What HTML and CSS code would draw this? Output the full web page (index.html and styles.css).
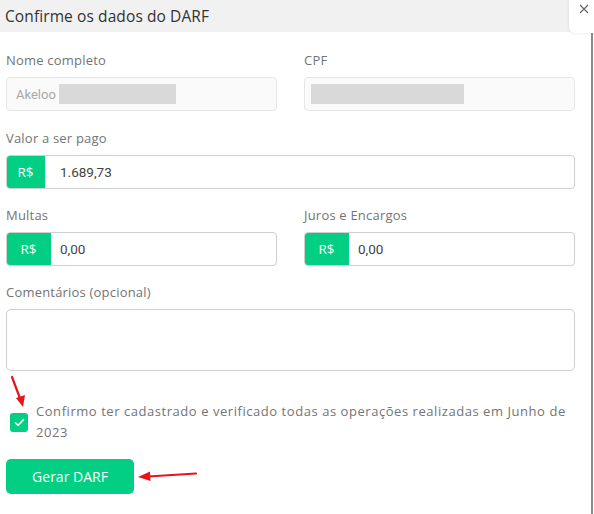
FILE: index.html
```html
<!DOCTYPE html>
<html lang="pt-BR">
<head>
    <meta charset="UTF-8">
    <title>Confirme os dados do DARF</title>
    <link rel="stylesheet" href="styles.css">
</head>
<body>
    <div class="modal">
        <div class="modal-header">
            <h2>Confirme os dados do DARF</h2>
        </div>
        <button class="close-btn" aria-label="Fechar">
            <svg width="10" height="10" viewBox="0 0 10 10"><path d="M1 1 L9 9 M9 1 L1 9" stroke="#666" stroke-width="1.2" fill="none"/></svg>
        </button>

        <div class="modal-body">
            <div class="row first-row">
                <div class="field">
                    <label>Nome completo</label>
                    <div class="input readonly">
                        <span class="value muted">Akeloo</span>
                        <span class="redacted name-redacted"></span>
                    </div>
                </div>
                <div class="field">
                    <label>CPF</label>
                    <div class="input readonly">
                        <span class="redacted cpf-redacted"></span>
                    </div>
                </div>
            </div>

            <div class="field">
                <label>Valor a ser pago</label>
                <div class="input money">
                    <span class="addon addon-wide">R$</span>
                    <span class="value value-wide">1.689,73</span>
                </div>
            </div>

            <div class="row">
                <div class="field">
                    <label>Multas</label>
                    <div class="input money">
                        <span class="addon">R$</span>
                        <span class="value">0,00</span>
                    </div>
                </div>
                <div class="field">
                    <label>Juros e Encargos</label>
                    <div class="input money">
                        <span class="addon">R$</span>
                        <span class="value">0,00</span>
                    </div>
                </div>
            </div>

            <div class="field">
                <label>Comentários (opcional)</label>
                <div class="textarea"></div>
            </div>

            <div class="confirm">
                <span class="checkbox">
                    <svg width="11" height="9" viewBox="0 0 11 9"><path d="M1.5 4.8 L4.2 7.3 L9.5 1.6" fill="none" stroke="#fff" stroke-width="1.6" stroke-linecap="round" stroke-linejoin="round"/></svg>
                </span>
                <p>Confirmo ter cadastrado e verificado todas as operações realizadas em Junho de 2023</p>
                <svg class="arrow arrow-down" width="20" height="34" viewBox="0 0 20 34"><path d="M3 2 L12 26" stroke="#e8141b" stroke-width="2.2" fill="none" stroke-linecap="round"/><path d="M7 23 L14 32 L16 20 Z" fill="#e8141b"/></svg>
            </div>

            <div class="actions">
                <button class="primary">Gerar DARF</button>
                <svg class="arrow arrow-left" width="62" height="12" viewBox="0 0 62 12"><path d="M60 3.5 L12 6.5" stroke="#e8141b" stroke-width="2.2" fill="none" stroke-linecap="round"/><path d="M2 7 L14 1.5 L14.5 11 Z" fill="#e8141b"/></svg>
            </div>
        </div>
    </div>
</body>
</html>
```

FILE: styles.css
```css
body {
    margin: 0;
    background: #fff;
    font-family: 'Open Sans', 'Noto Sans', Arial, sans-serif;
}

.modal {
    position: relative;
    width: 594px;
    height: 514px;
    overflow: hidden;
}

.modal::after {
    content: '';
    position: absolute;
    left: 591px;
    top: 23px;
    bottom: 0;
    width: 2px;
    background: #8a8a8a;
}

.modal-header {
    background: #f1f1f1;
    height: 32px;
    display: flex;
    align-items: center;
    padding-left: 5px;
}

h2 {
    margin: 0;
    font-size: 15.5px;
    font-weight: 400;
    color: #333;
    letter-spacing: 0.1px;
}

.close-btn {
    position: absolute;
    top: 0;
    right: 0;
    width: 25px;
    height: 33px;
    padding: 4px 0 0 4px;
    display: flex;
    justify-content: center;
    align-items: flex-start;
    border: none;
    background: #fff;
    border-bottom-left-radius: 6px;
    box-shadow: -1px 1px 3px rgba(0,0,0,0.06);
    z-index: 2;
}

.modal-body {
    padding: 20px 19px 0 6px;
    display: flex;
    flex-direction: column;
    gap: 18px;
}

.row {
    display: flex;
    gap: 27px;
}

.first-row {
    margin-bottom: 1px;
}

.row .field {
    flex: 1;
}

.field label {
    display: block;
    font-size: 13px;
    color: #747474;
    line-height: 16px;
    margin-bottom: 9px;
    letter-spacing: 0.2px;
}

.input {
    height: 34px;
    box-sizing: border-box;
    border: 1px solid #cfcfcf;
    border-radius: 4px;
    display: flex;
    align-items: center;
    background: #fff;
    font-family: Roboto, Arial, sans-serif;
    font-size: 13.5px;
    color: #444;
}

.input.readonly {
    background: #fafafa;
    border-color: #e6e6e6;
    padding-left: 9px;
}

.value.muted {
    color: #a8a8a8;
    font-size: 13px;
}

.redacted {
    display: block;
    height: 20px;
    background: #d9d9d9;
}

.name-redacted {
    width: 117px;
    margin-left: 3px;
}

.cpf-redacted {
    width: 153px;
    margin-left: -3px;
}

.money {
    overflow: hidden;
}

.addon {
    align-self: stretch;
    margin: -1px 0 -1px -1px;
    width: 45px;
    display: flex;
    align-items: center;
    justify-content: center;
    background: #02cf83;
    color: #fff;
    font-family: 'Open Sans', sans-serif;
    font-size: 13.5px;
    border-radius: 4px 0 0 4px;
}

.addon-wide {
    width: 39px;
}

.money .value {
    padding-left: 9px;
}

.money .value-wide {
    padding-left: 15px;
}

.textarea {
    height: 62px;
    box-sizing: border-box;
    border: 1px solid #cfcfcf;
    border-radius: 5px;
}

.confirm {
    position: relative;
    display: flex;
    align-items: center;
    gap: 8px;
    padding-left: 4px;
    margin-top: 12px;
}

.checkbox {
    flex: none;
    width: 18px;
    height: 19px;
    border-radius: 3px;
    background: #02cf83;
    display: flex;
    align-items: center;
    justify-content: center;
}

.confirm p {
    margin: 0;
    font-size: 13px;
    line-height: 21px;
    color: #747474;
    letter-spacing: 0.55px;
}

.arrow {
    position: absolute;
}

.arrow-down {
    left: 3px;
    top: -26px;
}

.actions {
    position: relative;
    margin-top: -2px;
}

.primary {
    width: 128px;
    height: 35px;
    border: none;
    border-radius: 5px;
    background: #02cf83;
    color: #fff;
    font-family: 'Open Sans', sans-serif;
    font-size: 14px;
}

.arrow-left {
    left: 130px;
    top: 11px;
}
```
